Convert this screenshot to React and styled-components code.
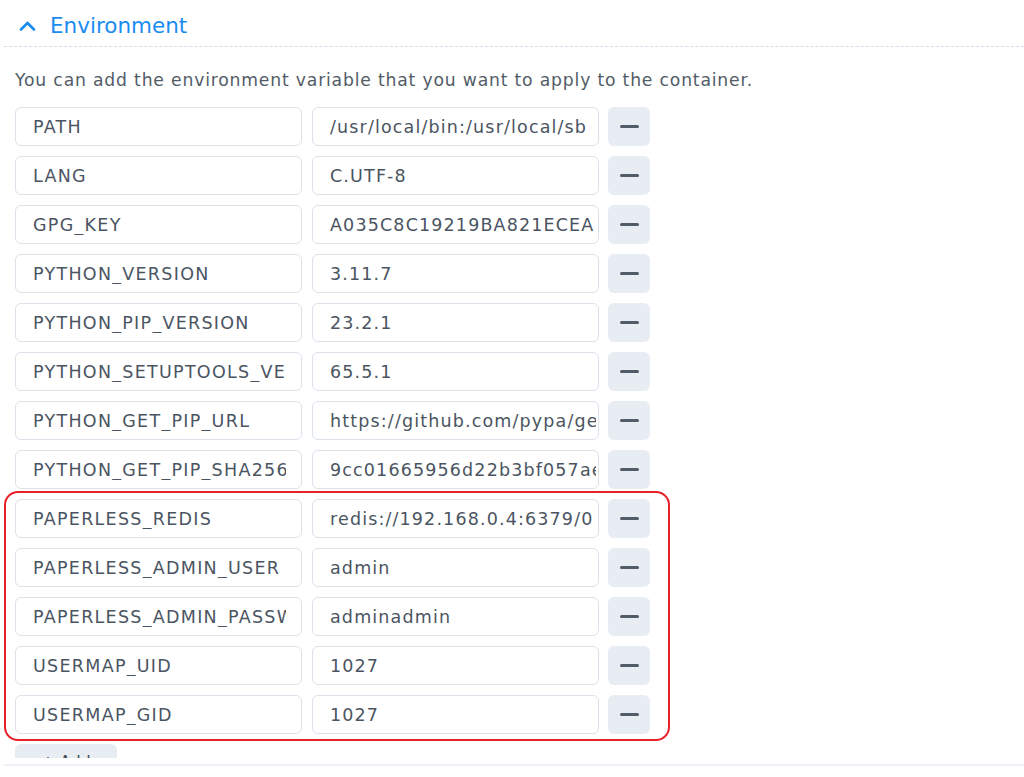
import React from "react";
import styled, { createGlobalStyle } from "styled-components";

const Global = createGlobalStyle`
  html, body { margin: 0; padding: 0; background: #ffffff; }
  body { font-family: "DejaVu Sans", Verdana, sans-serif; overflow: hidden; }
  * { box-sizing: border-box; }
`;

const Page = styled.div`
  width: 1024px;
  height: 777px;
  padding-left: 4px;
  display: flex;
  flex-direction: column;
  background: #fff;
`;

const Header = styled.div`
  height: 47px;
  display: flex;
  align-items: center;
  gap: 14px;
  padding-left: 15px;
  padding-top: 4px;
  border-bottom: 1px dashed #d3dde8;
`;

const Title = styled.span`
  font-size: 21.5px;
  color: #1a8cf0;
`;

const Scroll = styled.div`
  height: 711px;
  overflow: hidden;
  padding-left: 11px;
  position: relative;
`;

const Description = styled.p`
  margin: 20px 0 0 0;
  height: 26px;
  line-height: 26px;
  font-size: 17.2px;
  letter-spacing: 0.82px;
  color: #525c67;
  white-space: nowrap;
`;

const Rows = styled.div`
  margin-top: 14px;
  display: grid;
  grid-template-columns: 287px 287px 42px;
  column-gap: 10px;
  row-gap: 10px;
  width: fit-content;
`;

const Field = styled.div`
  height: 39px;
  border: 1px solid #dbe2ea;
  border-radius: 6px;
  padding: 0 ${(p) => (p.$value ? "2px" : "15px")} 0 17px;
  display: flex;
  align-items: center;
  background: #fff;
`;

const FieldText = styled.span`
  display: block;
  width: 100%;
  overflow: hidden;
  white-space: nowrap;
  font-size: 17.5px;
  letter-spacing: ${(p) => (p.$value ? "1.15px" : "1.28px")};
  color: #4b5562;
`;

const MinusButton = styled.div`
  height: 39px;
  width: 42px;
  margin-left: -1px;
  border-radius: 6px;
  background: #e8ecf3;
  display: flex;
  align-items: center;
  justify-content: center;
`;

const MinusBar = styled.span`
  display: block;
  width: 19px;
  height: 3px;
  border-radius: 2px;
  background: #525c68;
`;

const AddButton = styled.div`
  margin-top: 10px;
  width: 102px;
  height: 36px;
  border-radius: 6px;
  background: #e8ecf3;
  display: flex;
  align-items: flex-start;
  justify-content: center;
  padding-top: 8px;
  font-size: 16px;
  color: #3f4852;
`;

const Highlight = styled.div`
  position: absolute;
  left: 0px;
  top: 444px;
  width: 666px;
  height: 250px;
  border: 2.5px solid #e8202a;
  border-radius: 14px;
  pointer-events: none;
`;

const Footer = styled.div`
  margin-top: 6px;
  border-top: 2px solid #eef1f5;
`;

const rows = [
  ["PATH", "/usr/local/bin:/usr/local/sb"],
  ["LANG", "C.UTF-8"],
  ["GPG_KEY", "A035C8C19219BA821ECEA"],
  ["PYTHON_VERSION", "3.11.7"],
  ["PYTHON_PIP_VERSION", "23.2.1"],
  ["PYTHON_SETUPTOOLS_VERSION", "65.5.1"],
  ["PYTHON_GET_PIP_URL", "https://github.com/pypa/get-pip"],
  ["PYTHON_GET_PIP_SHA256", "9cc01665956d22b3bf057ae8287b035827bfd895"],
  ["PAPERLESS_REDIS", "redis://192.168.0.4:6379/0"],
  ["PAPERLESS_ADMIN_USER", "admin"],
  ["PAPERLESS_ADMIN_PASSWORD", "adminadmin"],
  ["USERMAP_UID", "1027"],
  ["USERMAP_GID", "1027"],
];

const Chevron = () => (
  <svg width="17" height="11" viewBox="0 0 17 11">
    <path d="M2 9.5 L8.5 3 L15 9.5" fill="none" stroke="#1a8cf0" strokeWidth="2.6" strokeLinecap="round" strokeLinejoin="round" />
  </svg>
);

export default function App() {
  return (
    <>
      <Global />
      <Page>
        <Header>
          <Chevron />
          <Title>Environment</Title>
        </Header>
        <Scroll>
          <Description>
            You can add the environment variable that you want to apply to the container.
          </Description>
          <Rows>
            {rows.map(([k, v]) => (
              <React.Fragment key={k}>
                <Field><FieldText>{k}</FieldText></Field>
                <Field $value><FieldText $value>{v}</FieldText></Field>
                <MinusButton>
                  <MinusBar />
                </MinusButton>
              </React.Fragment>
            ))}
          </Rows>
          <AddButton>+ Add</AddButton>
          <Highlight />
        </Scroll>
        <Footer />
      </Page>
    </>
  );
}
